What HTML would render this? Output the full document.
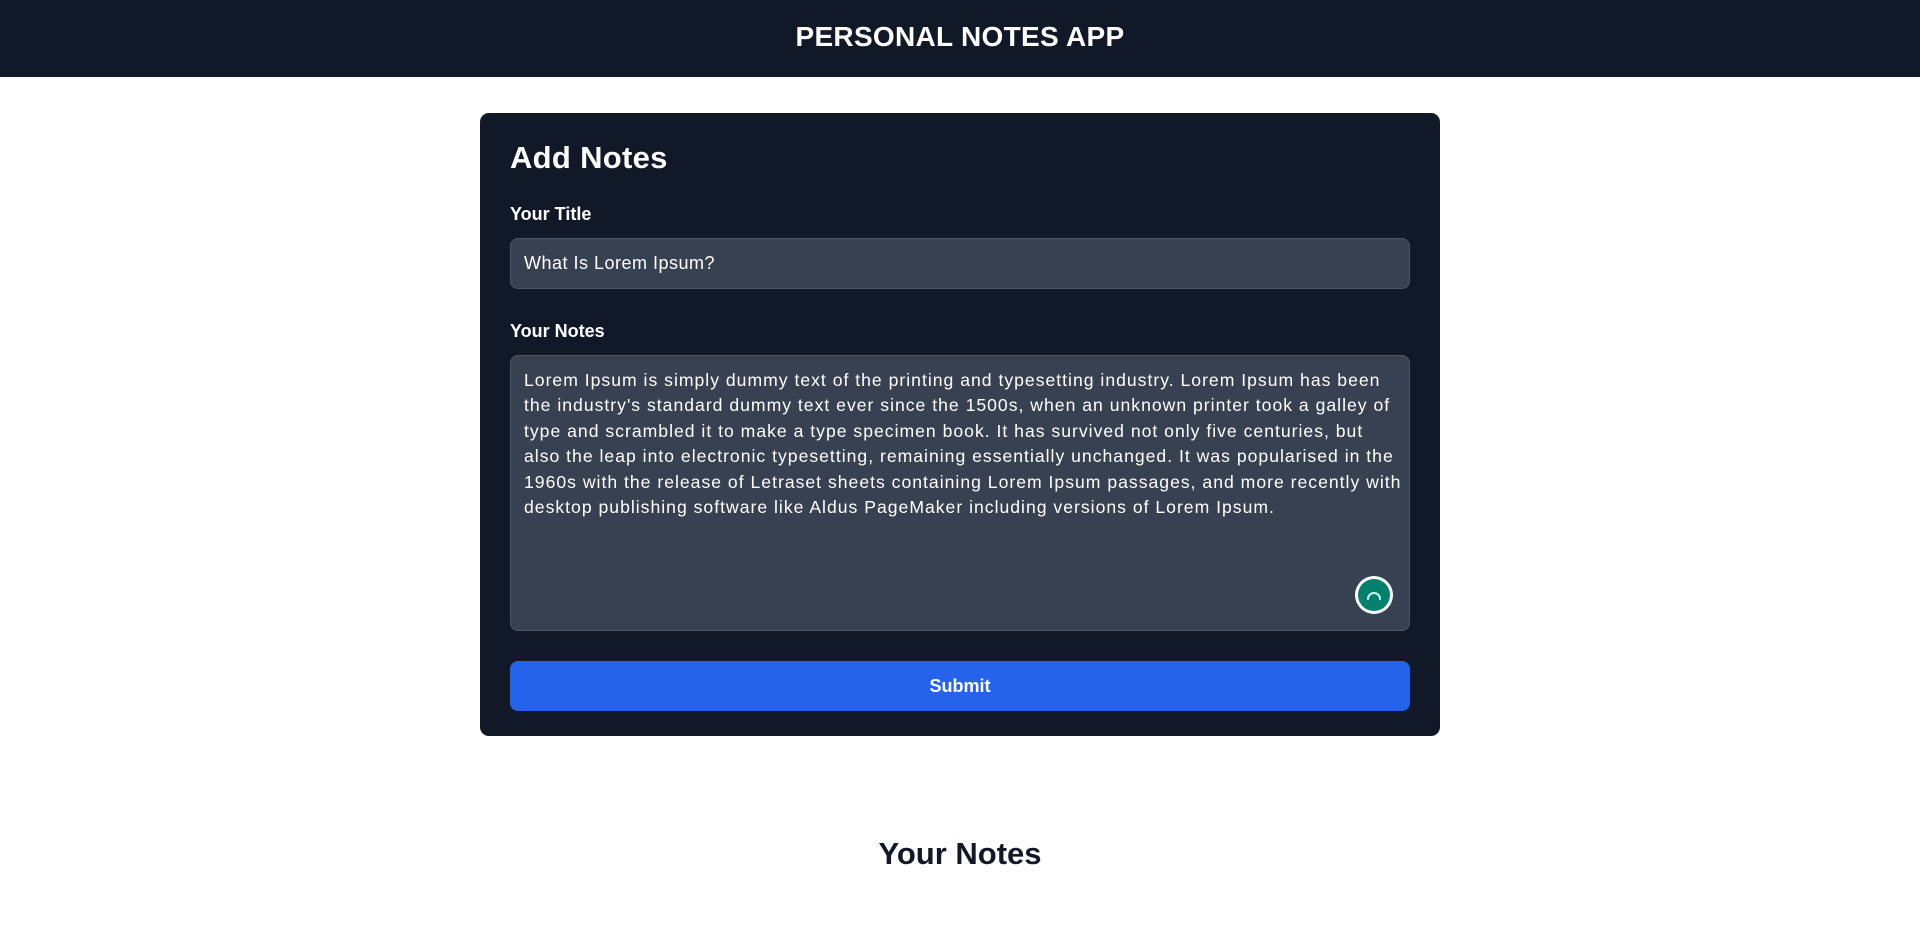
<!DOCTYPE html>
<html><head><meta charset="utf-8"><style>
*{box-sizing:border-box;margin:0;padding:0}
body{width:1920px;height:928px;background:#fff;font-family:"Liberation Sans",sans-serif;overflow:hidden;position:relative}
.hdr{position:absolute;left:0;top:0;width:1920px;height:77px;background:#111827;color:#fff;text-align:center;font-weight:bold;font-size:28px;line-height:74px;letter-spacing:0.3px}
.card{position:absolute;left:480px;top:113px;width:960px;height:623px;background:#111827;border-radius:9px}
.h2{position:absolute;left:30px;top:25px;color:#fff;font-weight:bold;font-size:31px;line-height:40px;letter-spacing:0.3px}
.lbl{position:absolute;left:30px;color:#fff;font-size:18px;font-weight:bold;line-height:22px}
.inp{position:absolute;left:30px;width:900px;background:#374151;border:1px solid #4b5563;border-radius:8px;color:#fff;font-size:18px;letter-spacing:0.5px}
.ta{white-space:pre;overflow:hidden;line-height:25.4px;padding:12px 13px;font-size:17.6px;letter-spacing:1px}
.btn{position:absolute;left:30px;top:548px;width:900px;height:50px;background:#2563eb;border-radius:8px;color:#fff;font-weight:bold;font-size:18px;text-align:center;line-height:50px}
.g{position:absolute;left:875px;top:463px;width:38px;height:38px;border-radius:50%;background:#fff;display:flex;align-items:center;justify-content:center}
.g div{width:32px;height:32px;border-radius:50%;background:#00816d;display:flex;align-items:center;justify-content:center}
.yn{position:absolute;top:832px;left:0;width:1920px;text-align:center;color:#111827;font-weight:bold;font-size:31px;line-height:44px}
</style></head><body>
<div class="hdr">PERSONAL NOTES APP</div>
<div class="card">
<div class="h2">Add Notes</div>
<div class="lbl" style="top:90px">Your Title</div>
<div class="inp" style="top:125px;height:51px;line-height:49px;padding-left:13px">What Is Lorem Ipsum?</div>
<div class="lbl" style="top:207px">Your Notes</div>
<div class="inp ta" style="top:242px;height:276px">Lorem Ipsum is simply dummy text of the printing and typesetting industry. Lorem Ipsum has been
the industry's standard dummy text ever since the 1500s, when an unknown printer took a galley of
type and scrambled it to make a type specimen book. It has survived not only five centuries, but
also the leap into electronic typesetting, remaining essentially unchanged. It was popularised in the
1960s with the release of Letraset sheets containing Lorem Ipsum passages, and more recently with
desktop publishing software like Aldus PageMaker including versions of Lorem Ipsum.</div>
<div class="g"><div><svg width="18" height="18" viewBox="0 0 18 18"><path d="M3 13 A6 6 0 1 1 15 13" fill="none" stroke="#cfe" stroke-width="2" stroke-linecap="round"/></svg></div></div>
<div class="btn">Submit</div>
</div>
<div class="yn">Your Notes</div>
</body></html>
